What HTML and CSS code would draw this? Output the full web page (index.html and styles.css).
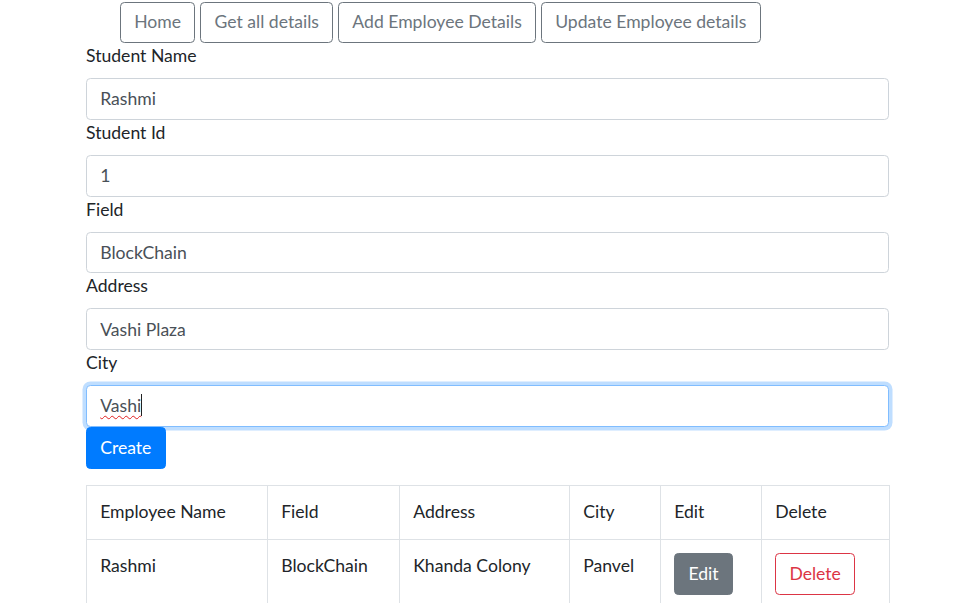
FILE: index.html
```html
<!DOCTYPE html>
<html lang="en">
<head>
<meta charset="utf-8">
<title>Employee Details</title>
<link rel="stylesheet" href="styles.css">
</head>
<body>
<div class="page">
  <nav class="nav">
    <button class="btn btn-outline">Home</button>
    <button class="btn btn-outline">Get all details</button>
    <button class="btn btn-outline">Add Employee Details</button>
    <button class="btn btn-outline">Update Employee details</button>
  </nav>
  <form class="form">
    <label class="label">Student Name</label>
    <input class="form-control" type="text" value="Rashmi">
    <label class="label">Student Id</label>
    <input class="form-control" type="text" value="1">
    <label class="label">Field</label>
    <input class="form-control" type="text" value="BlockChain">
    <label class="label">Address</label>
    <input class="form-control" type="text" value="Vashi Plaza">
    <label class="label">City</label>
    <div class="form-control focused"><span class="misspelled">Vashi</span><span class="caret"></span></div>
    <div><button type="button" class="btn btn-primary">Create</button></div>
  </form>
  <table class="table">
    <colgroup>
      <col class="c1"><col class="c2"><col class="c3"><col class="c4"><col class="c5"><col class="c6">
    </colgroup>
    <thead>
      <tr><th>Employee Name</th><th>Field</th><th>Address</th><th>City</th><th>Edit</th><th>Delete</th></tr>
    </thead>
    <tbody>
      <tr>
        <td>Rashmi</td><td>BlockChain</td><td>Khanda Colony</td><td>Panvel</td>
        <td><button class="btn btn-secondary">Edit</button></td>
        <td><button class="btn btn-outline-danger">Delete</button></td>
      </tr>
    </tbody>
  </table>
</div>
</body>
</html>
```
FILE: styles.css
```css
* { box-sizing: border-box; }
html, body { margin: 0; padding: 0; background: #fff; }
body {
  font-family: "Lato", "Liberation Sans", sans-serif;
  font-size: 17.6px;
  line-height: 26.4px;
  color: #212529;
}
.page { margin-left: 86px; width: 803px; }
.nav { display: flex; gap: 5px; padding: 1.5px 0 0 34px; }
.btn {
  display: inline-block;
  font: inherit;
  line-height: 26.4px;
  padding: 6.6px 13.2px;
  border: 1.1px solid transparent;
  border-radius: 4.4px;
  background: transparent;
  cursor: pointer;
  vertical-align: top;
}
.btn-outline { color: #6c757d; border-color: #6c757d; }
.btn-primary { color: #fff; background: #007bff; border-color: #007bff; }
.btn-secondary { color: #fff; background: #6c757d; border-color: #6c757d; }
.btn-outline-danger { color: #dc3545; border-color: #dc3545; }
.form { display: flex; flex-direction: column; }
.label { display: block; margin-bottom: 8.6px; }
.form-control {
  display: block;
  width: 100%;
  height: 41.8px;
  padding: 6.6px 13.2px;
  font: inherit;
  line-height: 26.4px;
  color: #495057;
  background: #fff;
  border: 1.1px solid #ced4da;
  border-radius: 4.4px;
  outline: none;
}
.focused { border-color: #80bdff; box-shadow: 0 0 0 3.5px rgba(0, 123, 255, 0.25); }
.misspelled { text-decoration: underline wavy #e02020; text-decoration-thickness: 1px; text-underline-offset: 3px; }
.caret { display: inline-block; width: 1px; height: 22px; background: #222; vertical-align: -4px; }
.table { margin-top: 16.5px; width: 803px; border-collapse: collapse; table-layout: fixed; }
.c1 { width: 181px; } .c2 { width: 132px; } .c3 { width: 170px; }
.c4 { width: 91px; } .c5 { width: 101px; } .c6 { width: 128px; }
.table th, .table td {
  border: 1px solid #dee2e6;
  padding: 13.2px;
  text-align: left;
  vertical-align: top;
  font-weight: 400;
}
```
